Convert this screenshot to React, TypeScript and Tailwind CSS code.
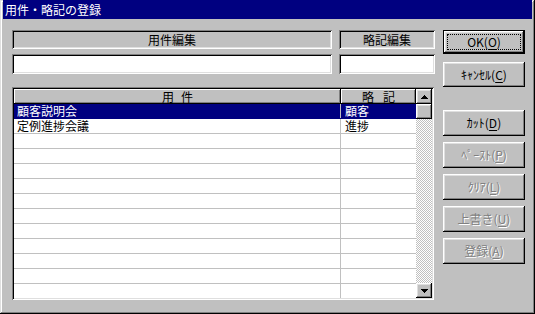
import React from "react";

const raised =
  "shadow-[inset_-1px_-1px_#000000,inset_1px_1px_#ffffff,inset_-2px_-2px_#808080,inset_2px_2px_#dfdfdf]";
const sunken =
  "shadow-[inset_1px_1px_#808080,inset_-1px_-1px_#ffffff,inset_2px_2px_#000000,inset_-2px_-2px_#dfdfdf]";

const font = "font-['MS_UI_Gothic','Noto_Sans_CJK_JP',sans-serif]";

function U({ c }: { c: string }) {
  return <span className="underline underline-offset-2">{c}</span>;
}

function Btn({
  children,
  disabled,
  h,
  mt,
}: {
  children: React.ReactNode;
  disabled?: boolean;
  h: string;
  mt: string;
}) {
  return (
    <div
      className={`${raised} ${h} ${mt} w-[82px] bg-[#c0c0c0] flex items-center justify-center text-[12px] leading-[14px] ${
        disabled
          ? "text-[#808080] [text-shadow:1px_1px_0_#ffffff]"
          : "text-black"
      }`}
    >
      {children}
    </div>
  );
}

function ArrowUp() {
  return (
    <svg width="7" height="4" viewBox="0 0 7 4">
      <path d="M3 0h1v1h1v1h1v1h1v1H0V3h1V2h1V1h1z" fill="#000" />
    </svg>
  );
}
function ArrowDown() {
  return (
    <svg width="7" height="4" viewBox="0 0 7 4">
      <path d="M0 0h7v1H6v1H5v1H4v1H3V3H2V2H1V1H0z" fill="#000" />
    </svg>
  );
}

const rows: [string, string][] = [
  ["顧客説明会", "顧客"],
  ["定例進捗会議", "進捗"],
  ["", ""],
  ["", ""],
  ["", ""],
  ["", ""],
  ["", ""],
  ["", ""],
  ["", ""],
  ["", ""],
  ["", ""],
  ["", ""],
  ["", ""],
];

export default function App() {
  return (
    <div
      className={`${font} w-[535px] h-[314px] bg-[#c0c0c0] flex flex-col px-[3px] pb-[3px] shadow-[inset_-1px_-1px_#000000,inset_1px_1px_#dfdfdf,inset_-2px_-2px_#808080,inset_2px_2px_#ffffff] overflow-hidden`}
    >
      <div className="h-[19px] bg-[#000080] text-white text-[12px] leading-[19px] pl-[2px] shrink-0">
        用件・略記の登録
      </div>
      <div className="flex flex-row pl-[9px] pt-[11px]">
        <div className="w-[423px] flex flex-col">
          <div className="flex flex-row gap-[7px]">
            <div className="w-[320px] flex flex-col">
              <div
                className={`${sunken} h-[19px] flex items-center justify-center text-[12px] text-black`}
              >
                用件編集
              </div>
              <div className={`${sunken} h-[20px] mt-[5px] bg-white`} />
            </div>
            <div className="w-[96px] flex flex-col">
              <div
                className={`${sunken} h-[19px] flex items-center justify-center text-[12px] text-black`}
              >
                略記編集
              </div>
              <div className={`${sunken} h-[20px] mt-[5px] bg-white`} />
            </div>
          </div>
          <div
            className={`${sunken} mt-[13px] w-[422px] h-[213px] bg-white p-[2px] flex flex-row`}
          >
            <div className="w-[402px] flex flex-col overflow-hidden">
              <div className="h-[15px] flex flex-row shrink-0 text-[12px] leading-[14px] text-black">
                <div
                  className={`w-[327px] bg-[#c0c0c0] shadow-[inset_-1px_-1px_#000000,inset_1px_1px_#ffffff,inset_-2px_-2px_#808080] flex items-center justify-center gap-[7px]`}
                >
                  <span>用</span>
                  <span>件</span>
                </div>
                <div
                  className={`flex-1 bg-[#c0c0c0] shadow-[inset_-1px_-1px_#000000,inset_1px_1px_#ffffff,inset_-2px_-2px_#808080] flex items-center justify-center gap-[9px]`}
                >
                  <span>略</span>
                  <span>記</span>
                </div>
              </div>
              {rows.map(([a, b], i) => {
                const sel = i === 0;
                return (
                  <div
                    key={i}
                    className={`h-[15px] shrink-0 flex flex-row text-[12px] leading-[14px] border-b ${
                      sel
                        ? "bg-[#000080] text-white border-[#000080]"
                        : "bg-white text-black border-[#c0c0c0]"
                    }`}
                  >
                    <div className="w-[327px] pl-[3px] border-r border-[#c0c0c0] whitespace-nowrap">
                      {a}
                    </div>
                    <div className="flex-1 pl-[4px] whitespace-nowrap">{b}</div>
                  </div>
                );
              })}
            </div>
            <div className="w-[16px] flex flex-col">
              <div
                className={`${raised} h-[15px] bg-[#c0c0c0] flex items-center justify-center shrink-0`}
              >
                <ArrowUp />
              </div>
              <div className={`${raised} h-[15px] bg-[#c0c0c0] shrink-0`} />
              <div className="flex-1 bg-[image:repeating-conic-gradient(#c0c0c0_0%_25%,#ffffff_0%_50%)] bg-[length:2px_2px]" />
              <div
                className={`${raised} h-[15px] bg-[#c0c0c0] flex items-center justify-center shrink-0`}
              >
                <ArrowDown />
              </div>
            </div>
          </div>
        </div>
        <div className="ml-[8px] flex flex-col">
          <div className="w-[82px] h-[24px] border border-black">
            <div
              className={`${raised} w-full h-full bg-[#c0c0c0] flex p-[3px]`}
            >
              <div className="flex-1 border border-dotted border-black flex items-center justify-center text-[12px] leading-[14px] text-black">
                OK(<U c="O" />)
              </div>
            </div>
          </div>
          <Btn h="h-[25px]" mt="mt-[8px]">
            ｷｬﾝｾﾙ(<U c="C" />)
          </Btn>
          <Btn h="h-[26px]" mt="mt-[23px]">
            ｶｯﾄ(<U c="D" />)
          </Btn>
          <Btn h="h-[26px]" mt="mt-[6px]" disabled>
            ﾍﾟｰｽﾄ(<U c="P" />)
          </Btn>
          <Btn h="h-[26px]" mt="mt-[6px]" disabled>
            ｸﾘｱ(<U c="L" />)
          </Btn>
          <Btn h="h-[26px]" mt="mt-[6px]" disabled>
            上書き(<U c="U" />)
          </Btn>
          <Btn h="h-[26px]" mt="mt-[6px]" disabled>
            登録(<U c="A" />)
          </Btn>
        </div>
      </div>
    </div>
  );
}
